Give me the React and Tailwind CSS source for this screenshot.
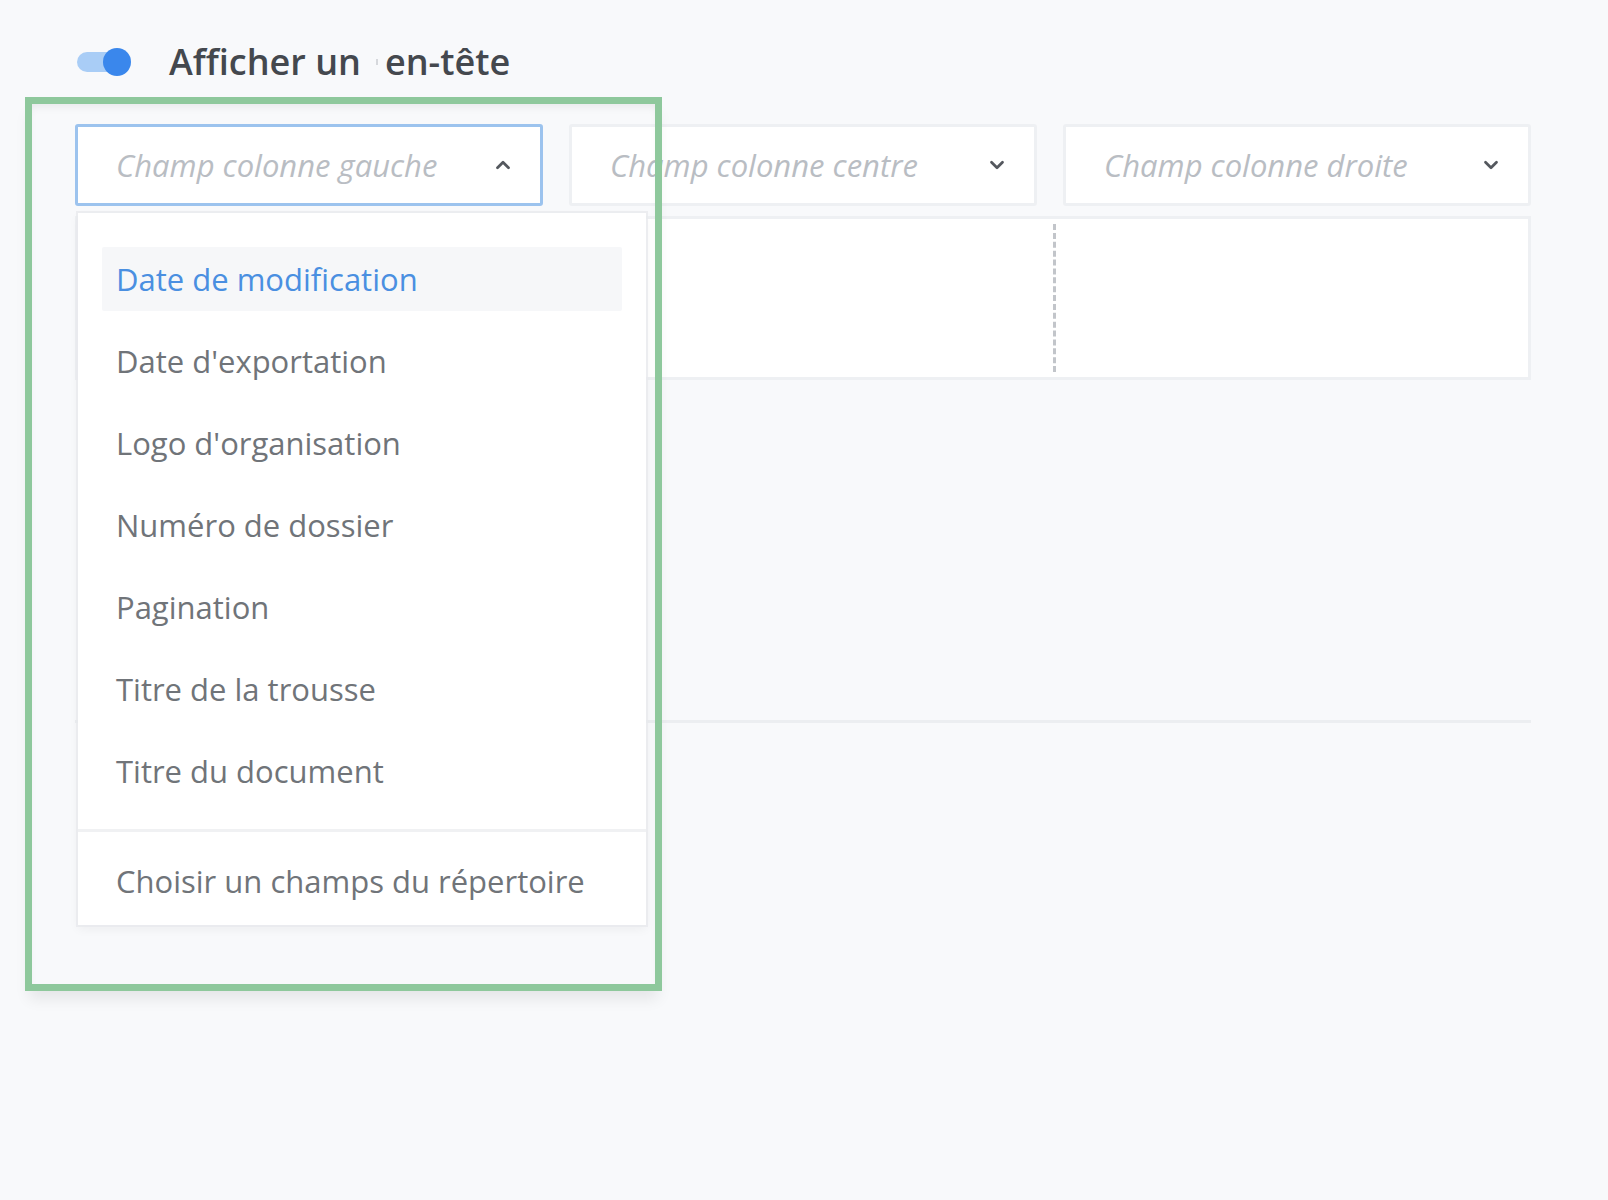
import React from "react";
import { ChevronDown, ChevronUp } from "lucide-react";

const options = [
  "Date de modification",
  "Date d'exportation",
  "Logo d'organisation",
  "Numéro de dossier",
  "Pagination",
  "Titre de la trousse",
  "Titre du document",
];

function Select({ placeholder, open, children }) {
  return (
    <div className="relative">
      <div
        className={
          open
            ? "flex h-[82px] items-center justify-between rounded-[3px] border-[3px] border-[#9cc3ee] bg-white pl-[38px] pr-[26px]"
            : "flex h-[82px] items-center justify-between rounded-[3px] border-[3px] border-[#eef0f3] bg-white pl-[38px] pr-[26px]"
        }
      >
        <span className="text-[31px] italic text-[#b9bdc3]">{placeholder}</span>
        {open ? (
          <ChevronUp size={22} strokeWidth={3} className="text-[#54585e]" />
        ) : (
          <ChevronDown size={22} strokeWidth={3} className="text-[#54585e]" />
        )}
      </div>
      {children}
    </div>
  );
}

export default function App() {
  return (
    <div className="relative min-h-screen bg-[#f8f9fb] font-['Open_Sans',sans-serif]">
      <div className="pl-[75px] pt-[43px]">
        {/* header switch */}
        <div className="flex h-[38px] items-center gap-[38px]">
          <div className="relative ml-[2px] h-[30px] w-[54px]">
            <div className="absolute left-0 top-[5px] h-[20px] w-[48px] rounded-full bg-[#a9cdf6]" />
            <div className="absolute right-0 top-[1px] h-[28px] w-[28px] rounded-full bg-[#3a87ec]" />
          </div>
          <div className="flex items-center text-[36px] font-semibold text-[#44484e]">
            <span>Afficher un</span>
            <span className="ml-[15px] mr-[7px] h-[6px] w-[2px] bg-[#d6d8dc]" />
            <span>en-tête</span>
          </div>
        </div>

        {/* column selectors */}
        <div className="mt-[43px] grid w-[1456px] grid-cols-3 gap-[26px]">
          <Select placeholder="Champ colonne gauche" open>
            <div className="absolute left-[3px] top-[89px] z-10 w-[568px] bg-white shadow-[0_0_0_2px_rgba(232,234,238,0.8),0_4px_10px_rgba(0,0,0,0.05)]">
              <ul className="flex flex-col gap-[18px] px-[24px] pb-[26px] pt-[34px]">
                {options.map((o, i) => (
                  <li
                    key={o}
                    className={
                      i === 0
                        ? "flex h-[64px] items-center rounded-[2px] bg-[#f6f7f9] px-[14px] text-[31px] text-[#4a8fe1]"
                        : "flex h-[64px] items-center px-[14px] text-[31px] text-[#707479]"
                    }
                  >
                    {o}
                  </li>
                ))}
              </ul>
              <div className="flex h-[96px] items-center border-t-[3px] border-[#f0f1f3] px-[38px] pt-[6px] text-[31px] text-[#707479]">
                Choisir un champs du répertoire
              </div>
            </div>
          </Select>
          <Select placeholder="Champ colonne centre" />
          <Select placeholder="Champ colonne droite" />
        </div>

        {/* header preview cells */}
        <div className="mt-[10px] grid h-[164px] w-[1456px] grid-cols-[481px_494px_1fr] border-[3px] border-[#eef0f3] bg-white">
          <div />
          <div className="my-[5px] border-l-[3px] border-dashed border-[#c2c5ca]" />
          <div className="my-[5px] border-l-[3px] border-dashed border-[#c2c5ca]" />
        </div>

        <div className="mt-[340px] h-[3px] w-[1456px] bg-[#eceef1]" />
      </div>

      {/* highlight frame */}
      <div className="pointer-events-none absolute left-[25px] top-[97px] z-20 h-[894px] w-[637px] border-[7px] border-[#8ec89c] shadow-[0_12px_14px_-4px_rgba(0,0,0,0.08),inset_0_6px_8px_-3px_rgba(0,0,0,0.07)]" />
    </div>
  );
}
